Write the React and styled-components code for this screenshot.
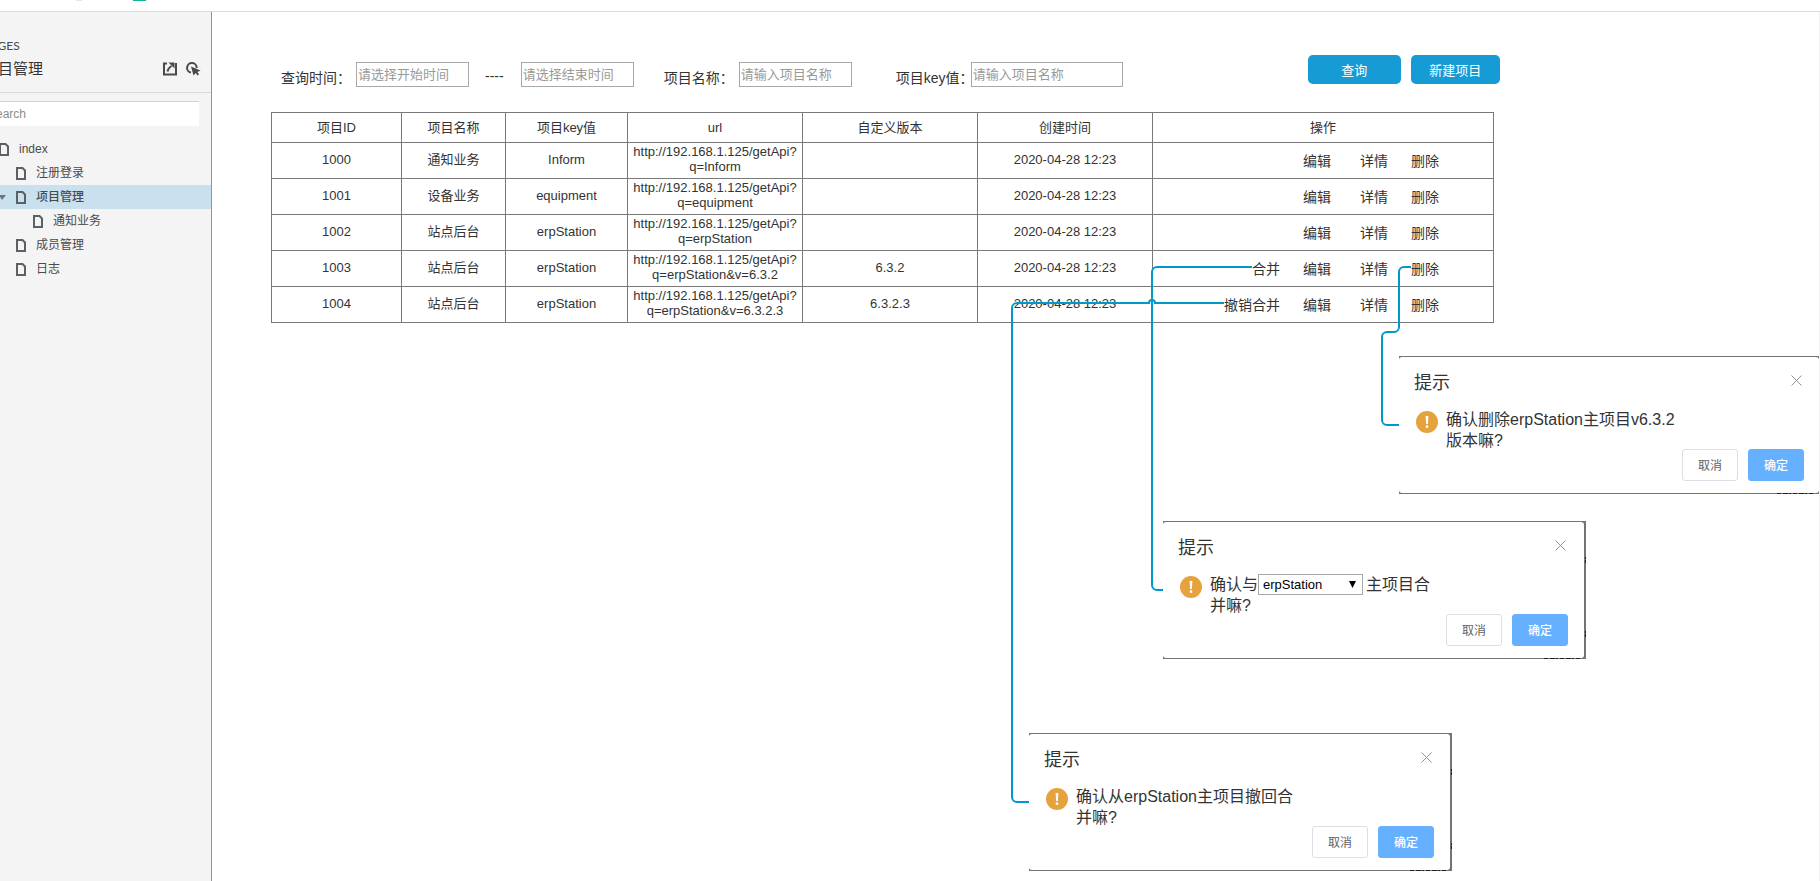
import React from "react";
import styled, { createGlobalStyle } from "styled-components";

const Global = createGlobalStyle`
  *, *::before, *::after { box-sizing: border-box; }
  body {
    margin: 0;
    background: #fff;
    color: #333;
    font: 13px/15px "Liberation Sans", "Noto Sans CJK SC", sans-serif;
  }
  button, input, select { font-family: inherit; margin: 0; }
`;

const Page = styled.div`
  display: flex;
  flex-direction: column;
  min-height: 100vh;
  overflow: hidden;
`;

const TopBar = styled.header`
  height: 12px;
  flex: none;
  display: flex;
  align-items: flex-start;
  padding-left: 76px;
  gap: 51px;
  border-bottom: 1px solid #d8dadc;
`;

const TopTab = styled.span`
  width: ${(p) => (p.$active ? 13 : 6)}px;
  height: 1px;
  background: ${(p) => (p.$active ? "#0db795" : "#e6e6e6")};
`;

const Body = styled.div`
  flex: 1;
  display: flex;
`;

const Sidebar = styled.aside`
  width: 212px;
  flex: none;
  display: flex;
  justify-content: flex-end;
  overflow: hidden;
  background: #f4f4f4;
  border-right: 1px solid #8f949a;
`;

const SidePanel = styled.div`
  width: 240px;
  flex: none;
`;

const SideHead = styled.div`
  padding: 25px 10px 9px 12px;
  border-bottom: 1px solid #d9d9d9;
`;

const SideLabel = styled.div`
  font: 12px/18px Lato, sans-serif;
  color: #4a4a4a;
`;

const SideTitleRow = styled.div`
  display: flex;
  align-items: center;
  justify-content: space-between;
  height: 28px;
`;

const SideTitle = styled.h1`
  margin: 0;
  font-size: 15px;
  line-height: 28px;
  font-weight: 400;
`;

const SideTools = styled.div`
  display: flex;
  gap: 9px;
`;

const IconButton = styled.button`
  display: flex;
  padding: 0;
  border: 0;
  background: none;
  color: ${(p) => p.$color || "#4a4a4a"};
`;

const Search = styled.input`
  display: block;
  width: 216px;
  height: 25px;
  margin: 8px 12px 11px;
  padding: 0 5px;
  border: 0;
  border-top: 1px solid #d4d4d4;
  background: #fff;
  font-size: 12px;
  &::placeholder { color: #8c8c8c; opacity: 1; }
`;

const Tree = styled.ul`
  margin: 0;
  padding: 0;
  list-style: none;
`;

const TreeRow = styled.li`
  display: flex;
  align-items: center;
  height: 24px;
  padding-left: ${(p) => 11 + p.$level * 17}px;
  background: ${(p) => (p.$selected ? "#c9e0ef" : "transparent")};
`;

const Caret = styled.span`
  width: 17px;
  display: flex;
`;

const TreeLink = styled.a`
  display: flex;
  align-items: center;
  gap: 10px;
  color: #4a4a4a;
  font-size: 12px;
  line-height: 24px;
  font-weight: ${(p) => (p.$selected ? 500 : 400)};
  text-decoration: none;
`;

const Canvas = styled.main`
  flex: 1;
  min-width: 0;
  position: relative;
  padding: 43px 59px 0;
  border-right: 1px solid #f2f2f2;
`;

const Filters = styled.form`
  display: flex;
  align-items: flex-start;
  padding-left: 10px;
`;

const Field = styled.label`
  display: flex;
  align-items: flex-start;
  gap: ${(p) => p.$gap || 0}px;
  margin-right: ${(p) => p.$after}px;
  padding-top: 7px;
  white-space: nowrap;
`;

const FieldText = styled.span`
  width: 75px;
  padding-top: 6px;
  font-size: 14px;
  line-height: 20px;
`;

const RangeMark = styled.span`
  padding-top: 4px;
  font-size: 14px;
  line-height: 20px;
`;

const TextBox = styled.input`
  width: ${(p) => (p.$wide ? 152 : 113)}px;
  height: 25px;
  padding: 0 1px;
  border: 1px solid #a9a9a9;
  background: #fff;
  font-size: 13px;
  &::placeholder { color: #999; opacity: 1; }
`;

const Action = styled.button`
  width: ${(p) => (p.$wide ? 93 : 89)}px;
  height: 29px;
  padding: 0;
  border: 0;
  border-radius: 5px;
  background: #169bd5;
  color: #fff;
  font-size: 13px;
`;

const Buttons = styled.div`
  display: flex;
  gap: 10px;
  margin-left: 185px;
`;

const Table = styled.table`
  width: 100%;
  max-width: 1223px;
  margin-top: 24px;
  border-collapse: collapse;
  table-layout: fixed;
`;

const Cell = styled.td`
  height: 36px;
  padding: 0 0 2px;
  border: 1px solid #797979;
  text-align: center;
  vertical-align: middle;
`;

const UrlCell = styled(Cell)`
  padding: 1px 0 0;
  vertical-align: top;
`;

const HeadCell = styled(Cell)`
  height: 30px;
  padding: 0;
  font-weight: 400;
`;

const Ops = styled.div`
  display: flex;
  justify-content: flex-end;
  gap: 23px;
  padding: 2px 54px 0 0;
`;

const Op = styled.button`
  padding: 0;
  margin-right: ${(p) => (p.$spaced ? 6 : 0)}px;
  border: 0;
  background: none;
  color: #333;
  font-size: 14px;
  line-height: 20px;
`;

const Connectors = styled.svg`
  position: absolute;
  left: 0;
  top: 0;
  pointer-events: none;
`;

const Frame = styled.section`
  position: absolute;
  left: ${(p) => p.$x}px;
  top: ${(p) => p.$y}px;
  width: ${(p) => (p.$flush ? 420 : 423)}px;
  padding: 1px ${(p) => (p.$flush ? 0 : 2)}px 1px 0;
  background: #737477;
`;

const Backdrop = styled.svg`
  position: absolute;
  right: 0;
  bottom: 0;
  pointer-events: none;
`;

const Dialog = styled.div`
  height: 136px;
  padding: 14px ${(p) => (p.$flush ? 15 : 16)}px 0 15px;
  border-radius: 3px;
  background: #fff;
`;

const DialogHead = styled.div`
  display: flex;
  justify-content: space-between;
  align-items: flex-start;
`;

const DialogTitle = styled.h2`
  margin: 0;
  font-size: 18px;
  line-height: 24px;
  font-weight: 400;
`;

const Close = styled(IconButton)`
  padding: 4px 2px;
`;

const Message = styled.div`
  display: flex;
  gap: 8px;
  height: 54px;
  padding: 14px 0 0 2px;
`;

const WarnIcon = styled.svg`
  flex: none;
  margin-top: 2px;
`;

const MessageText = styled.p`
  margin: 0;
  width: 231px;
  font-size: 16px;
  line-height: 21px;
`;

const Select = styled.select`
  appearance: none;
  width: 105px;
  height: 21px;
  margin-right: 3px;
  padding: 0 4px;
  border: 1px solid #a9a9a9;
  border-radius: 0;
  background: #fff url("data:image/svg+xml,%3Csvg xmlns='http://www.w3.org/2000/svg' width='7' height='7'%3E%3Cpath d='M0 0h7L3.5 7z'/%3E%3C/svg%3E") no-repeat right 6px center;
  color: #000;
  font-size: 13px;
  vertical-align: top;
`;

const DialogFoot = styled.div`
  display: flex;
  justify-content: flex-end;
  gap: 10px;
`;

const DialogButton = styled.button`
  width: 56px;
  height: 32px;
  padding: 0 0 2px;
  border: 1px solid ${(p) => (p.$primary ? "#66b1ff" : "#dcdfe6")};
  border-radius: 3px;
  background: ${(p) => (p.$primary ? "#66b1ff" : "#fff")};
  color: ${(p) => (p.$primary ? "#fff" : "#606266")};
  font-size: 12px;
  font-weight: ${(p) => (p.$primary ? 500 : 400)};
`;

const pages = [
  { name: "index", level: 0 },
  { name: "注册登录", level: 1 },
  { name: "项目管理", level: 1, selected: true },
  { name: "通知业务", level: 2 },
  { name: "成员管理", level: 1 },
  { name: "日志", level: 1 },
];

const columns = [
  { title: "项目ID", width: 130 },
  { title: "项目名称", width: 104 },
  { title: "项目key值", width: 122 },
  { title: "url", width: 175 },
  { title: "自定义版本", width: 175 },
  { title: "创建时间", width: 175 },
  { title: "操作", width: 341 },
];

const projects = [
  { id: "1000", name: "通知业务", key: "Inform", query: "q=Inform", version: "" },
  { id: "1001", name: "设备业务", key: "equipment", query: "q=equipment", version: "" },
  { id: "1002", name: "站点后台", key: "erpStation", query: "q=erpStation", version: "" },
  { id: "1003", name: "站点后台", key: "erpStation", query: "q=erpStation&v=6.3.2", version: "6.3.2", extra: "合并" },
  { id: "1004", name: "站点后台", key: "erpStation", query: "q=erpStation&v=6.3.2.3", version: "6.3.2.3", extra: "撤销合并" },
];

function PageIcon() {
  return (
    <svg width="10" height="13" viewBox="0 0 10 13" fill="none" stroke="#5c5f64" strokeWidth="2">
      <path d="M1 1h5.500L9 3.500V12H1z" />
    </svg>
  );
}

function Prompt({ x, y, flush, children }) {
  return (
    <Frame $x={x} $y={y} $flush={flush} role="dialog" aria-label="提示">
      <Dialog $flush={flush}>
        <DialogHead>
          <DialogTitle>提示</DialogTitle>
          <Close type="button" aria-label="关闭" $color="#909399">
            <svg width="11" height="11" viewBox="0 0 11 11" stroke="currentColor">
              <path d="M.5.5l10 10M10.5.5l-10 10" />
            </svg>
          </Close>
        </DialogHead>
        <Message>
          <WarnIcon width="22" height="22" viewBox="0 0 22 22">
            <circle cx="11" cy="11" r="11" fill="#e6a23c" />
            <path d="M9.6 5h2.8l-.5 8h-1.8z" fill="#fff" />
            <circle cx="11" cy="15.7" r="1.4" fill="#fff" />
          </WarnIcon>
          <MessageText>{children}</MessageText>
        </Message>
        <DialogFoot>
          <DialogButton type="button">取消</DialogButton>
          <DialogButton type="button" $primary>确定</DialogButton>
        </DialogFoot>
      </Dialog>
      <Backdrop width="45" height="104" viewBox="0 0 45 104" fill="none" stroke="#1d1f24">
        <path d="M3 103.5h36" strokeDasharray="4 2 5 1 2 2" />
        {!flush && <path d="M44.5 2v6M44.5 76v6" strokeDasharray="2 1 3" />}
      </Backdrop>
    </Frame>
  );
}

export default function App() {
  return (
    <Page>
      <Global />
      <TopBar>
        <TopTab />
        <TopTab $active />
      </TopBar>
      <Body>
        <Sidebar>
          <SidePanel>
            <SideHead>
              <SideLabel>PAGES</SideLabel>
              <SideTitleRow>
                <SideTitle>项目管理</SideTitle>
                <SideTools>
                  <IconButton type="button" aria-label="打开">
                    <svg width="14" height="14" viewBox="0 0 14 14" fill="none" stroke="currentColor" strokeWidth="2">
                      <path d="M4 1.500H1V12.500h12V1" />
                      <path d="M4.500 9.500C5 7 6 5.500 8.500 4" />
                      <path d="M5.500 .5h6v6z" fill="currentColor" stroke="none" />
                    </svg>
                  </IconButton>
                  <IconButton type="button" aria-label="交互">
                    <svg width="15" height="15" viewBox="0 0 15 15" fill="none" stroke="currentColor" strokeWidth="2">
                      <path d="M5 10.600A4.800 4.800 0 1 1 10.700 6" />
                      <path d="M5 4.500l9.500 4-3 1.500 1.500 2.500-1.500 1-1.800-2.500-2.200 2.500z" fill="currentColor" stroke="none" />
                    </svg>
                  </IconButton>
                </SideTools>
              </SideTitleRow>
            </SideHead>
            <Search type="search" placeholder="Search" aria-label="Search" />
            <Tree>
              {pages.map((p) => (
                <TreeRow key={p.name} $level={p.level} $selected={p.selected}>
                  <Caret>
                    {p.selected && (
                      <svg width="7" height="5" viewBox="0 0 7 5" fill="#70757a">
                        <path d="M0 0h7L3 5z" />
                      </svg>
                    )}
                  </Caret>
                  <TreeLink href="#" $selected={p.selected}>
                    <PageIcon />
                    {p.name}
                  </TreeLink>
                </TreeRow>
              ))}
            </Tree>
          </SidePanel>
        </Sidebar>
        <Canvas>
          <Filters>
            <Field $after={16}>
              <FieldText>查询时间：</FieldText>
              <TextBox placeholder="请选择开始时间" />
            </Field>
            <Field $gap={17} $after={30}>
              <RangeMark>----</RangeMark>
              <TextBox placeholder="请选择结束时间" aria-label="结束时间" />
            </Field>
            <Field $after={44}>
              <FieldText>项目名称：</FieldText>
              <TextBox placeholder="请输入项目名称" />
            </Field>
            <Field $after={0}>
              <FieldText>项目key值：</FieldText>
              <TextBox $wide placeholder="请输入项目名称" />
            </Field>
            <Buttons>
              <Action type="button" $wide>查询</Action>
              <Action type="button">新建项目</Action>
            </Buttons>
          </Filters>
          <Table>
            <colgroup>
              {columns.map((c) => (
                <col key={c.title} width={c.width} />
              ))}
            </colgroup>
            <thead>
              <tr>
                {columns.map((c) => (
                  <HeadCell as="th" key={c.title}>{c.title}</HeadCell>
                ))}
              </tr>
            </thead>
            <tbody>
              {projects.map((p) => (
                <tr key={p.id}>
                  <Cell>{p.id}</Cell>
                  <Cell>{p.name}</Cell>
                  <Cell>{p.key}</Cell>
                  <UrlCell>
                    http://192.168.1.125/getApi?
                    <br />
                    {p.query}
                  </UrlCell>
                  <Cell>{p.version}</Cell>
                  <Cell>2020-04-28 12:23</Cell>
                  <Cell>
                    <Ops>
                      {p.extra && <Op type="button">{p.extra}</Op>}
                      <Op type="button" $spaced>编辑</Op>
                      <Op type="button">详情</Op>
                      <Op type="button">删除</Op>
                    </Ops>
                  </Cell>
                </tr>
              ))}
            </tbody>
          </Table>
          <Connectors width="1300" height="800" viewBox="212 12 1300 800" fill="none" stroke="#0099cc" strokeWidth="2">
            <path d="M1411 267h-7a5 5 0 0 0-5 5v55a5 5 0 0 1-5 5h-7a5 5 0 0 0-5 5v83a5 5 0 0 0 5 5h12" />
            <path d="M1252 267h-95a5 5 0 0 0-5 5v313a5 5 0 0 0 5 5h6" />
            <path d="M1224 303h-69a3 3 0 0 0-6 0h-132a5 5 0 0 0-5 5v489a5 5 0 0 0 5 5h12" />
          </Connectors>
          <Prompt x={1187} y={344} flush>
            确认删除erpStation主项目v6.3.2版本嘛?
          </Prompt>
          <Prompt x={951} y={509}>
            确认与
            <Select aria-label="主项目" defaultValue="erpStation">
              <option>erpStation</option>
            </Select>
            主项目合并嘛?
          </Prompt>
          <Prompt x={817} y={721}>确认从erpStation主项目撤回合并嘛?</Prompt>
        </Canvas>
      </Body>
    </Page>
  );
}
